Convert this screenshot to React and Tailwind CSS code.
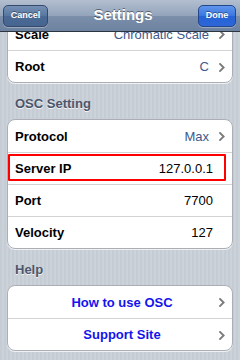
import React from "react";

function Chevron() {
  return (
    <svg width="6" height="9" viewBox="0 0 6 9" className="shrink-0">
      <polyline points="1,1 4.6,4.5 1,8" fill="none" stroke="#7b7b7b" strokeWidth="1.9" strokeLinecap="square" />
    </svg>
  );
}

function Row({ label, value, blue, chevron, first, children }) {
  return (
    <div className={`relative flex items-center h-[32px] pt-[1px] pl-[7px] ${chevron ? "pr-[7px]" : "pr-[19px]"} ${first ? "" : "border-t border-[#d4d4d4]"}`}>
      <span className="text-[13px] font-bold text-black">{label}</span>
      <span className={`ml-auto text-[13px] ${blue ? "text-[#40598c]" : "text-black"}`}>{value}</span>
      {chevron && <span className="ml-[10px] flex items-center"><Chevron /></span>}
      {children}
    </div>
  );
}

function LinkRow({ label, first }) {
  return (
    <div className={`flex items-center h-[32px] pt-[1px] pl-[7px] pr-[7px] ${first ? "" : "border-t border-[#d4d4d4]"}`}>
      <span className="flex-1 text-center text-[13px] font-bold text-[#1414ee] pl-[10px]">{label}</span>
      <Chevron />
    </div>
  );
}

function Card({ children }) {
  return (
    <div className="mx-[7px] bg-white rounded-[8px] border border-[#abafb5] overflow-hidden shadow-[0_1px_0_rgba(255,255,255,0.7)]">
      {children}
    </div>
  );
}

function Header({ text }) {
  return (
    <div className="h-[36px] pt-[13px] pl-[15px]">
      <div className="text-[13px] leading-[16px] font-bold text-[#4c566c] [text-shadow:0_1px_0_rgba(255,255,255,0.8)]">{text}</div>
    </div>
  );
}

export default function App() {
  return (
    <div
      className="relative w-[240px] h-[360px] overflow-hidden bg-[repeating-linear-gradient(90deg,#c5ccd4_0px,#c5ccd4_2px,#ccd2d9_2px,#ccd2d9_4px)]"
      style={{ fontFamily: '"Liberation Sans", Arial, sans-serif' }}
    >
      <div className="flex flex-col pt-[17px]">
        <Card>
          <Row label="Scale" value="Chromatic Scale" blue chevron first />
          <Row label="Root" value="C" blue chevron />
        </Card>
        <Header text="OSC Setting" />
        <Card>
          <Row label="Protocol" value="Max" blue chevron first />
          <Row label="Server IP" value="127.0.0.1">
            <div className="absolute left-0 right-[6px] top-[1px] bottom-[3px] border-2 border-[#ff0000] rounded-[1px]" />
          </Row>
          <Row label="Port" value="7700" />
          <Row label="Velocity" value="127" />
        </Card>
        <Header text="Help" />
        <Card>
          <LinkRow label="How to use OSC" first />
          <LinkRow label="Support Site" />
        </Card>
      </div>

      <div className="absolute top-0 left-0 right-0 h-[32px] flex items-center px-[3px] border-b border-[#2d3540] bg-[linear-gradient(180deg,#b3bfd0_0%,#93a4bb_50%,#7b8fab_52%,#6d82a0_100%)]">
        <div className="h-[22px] w-[45px] flex items-center justify-center rounded-[5px] border border-[#37496a] bg-[linear-gradient(180deg,#7690b4_0%,#5676a0_50%,#4a6a95_52%,#46658f_100%)] shadow-[0_1px_0_rgba(255,255,255,0.3)]">
          <span className="text-[9px] font-bold text-white [text-shadow:0_-1px_0_rgba(0,0,0,0.4)]">Cancel</span>
        </div>
        <div className="flex-1 text-center text-[15px] font-bold text-white [text-shadow:0_-1px_0_rgba(0,0,0,0.45)]">Settings</div>
        <div className="h-[22px] w-[38px] mr-[1px] flex items-center justify-center rounded-[5px] border border-[#24468a] bg-[linear-gradient(180deg,#5f95ec_0%,#3a76e0_50%,#2763d6_52%,#2c66d8_100%)] shadow-[0_1px_0_rgba(255,255,255,0.3)]">
          <span className="text-[9px] font-bold text-white [text-shadow:0_-1px_0_rgba(0,0,0,0.4)]">Done</span>
        </div>
      </div>
    </div>
  );
}
